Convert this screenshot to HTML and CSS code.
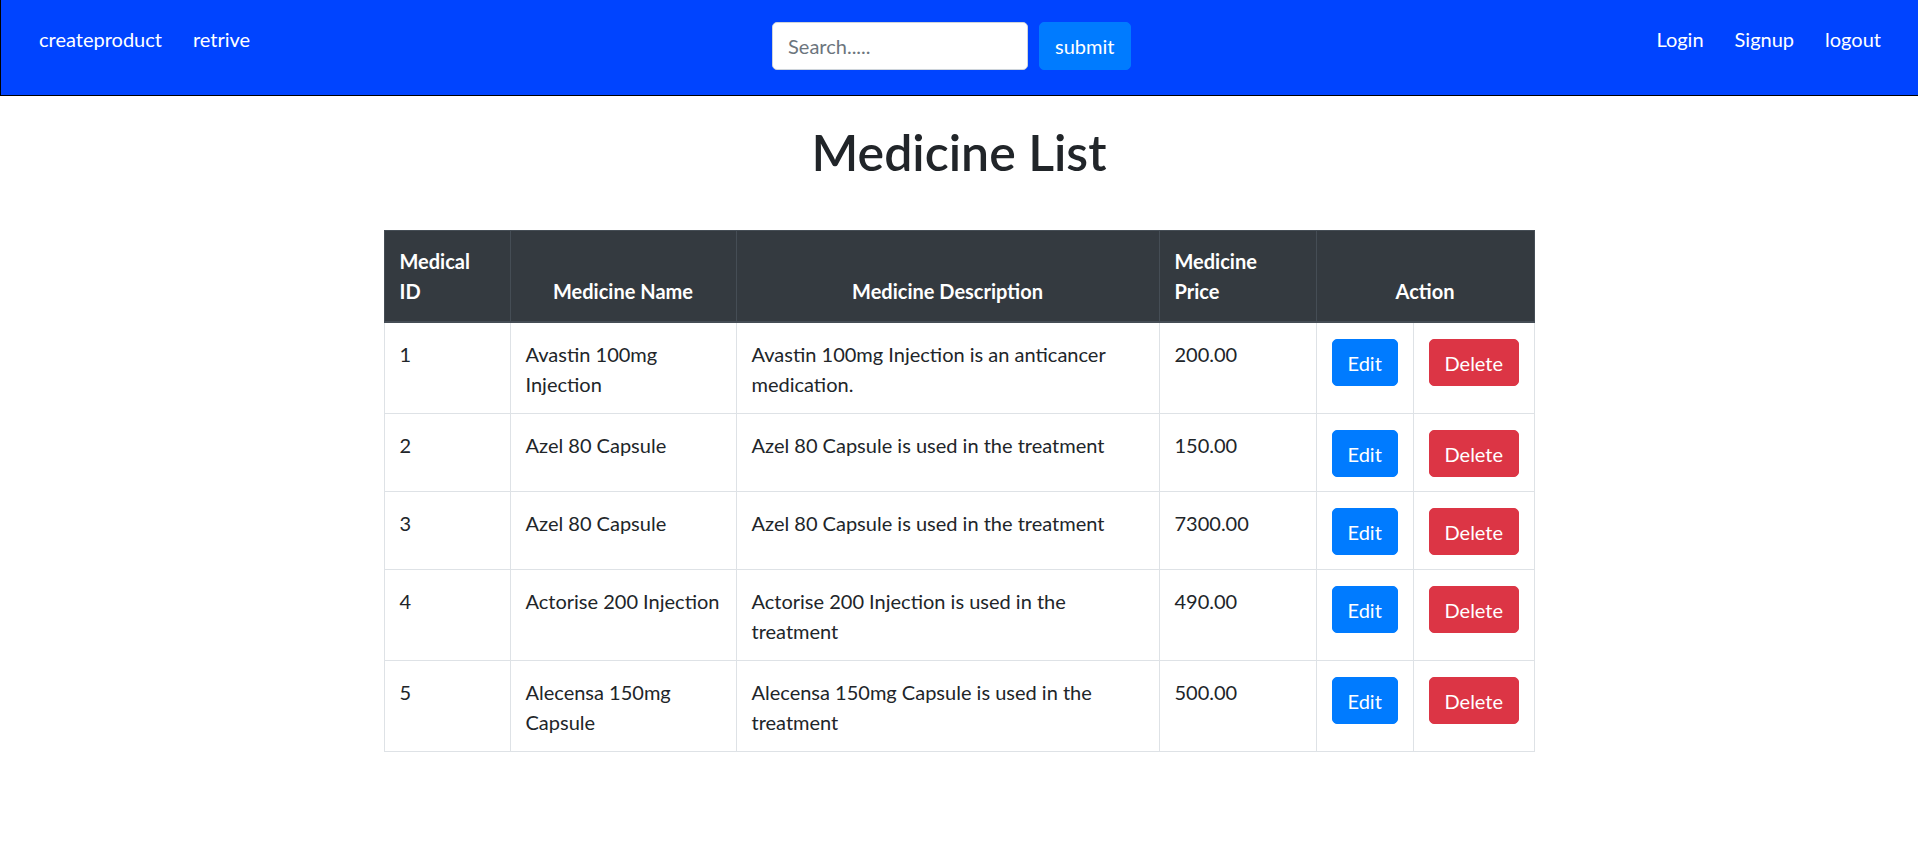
FILE: index.html
```html
<!DOCTYPE html>
<html lang="en">
<head>
<meta charset="utf-8">
<title>Medicine List</title>
<link rel="stylesheet" href="styles.css">
</head>
<body>
<nav class="navbar">
  <ul class="nav-links">
    <li><a href="#" class="nav-link">createproduct</a></li>
    <li><a href="#" class="nav-link">retrive</a></li>
  </ul>
  <form class="search">
    <input type="text" class="search-input" placeholder="Search.....">
    <button type="button" class="btn btn-primary search-btn">submit</button>
  </form>
  <ul class="nav-links">
    <li><a href="#" class="nav-link">Login</a></li>
    <li><a href="#" class="nav-link">Signup</a></li>
    <li><a href="#" class="nav-link">logout</a></li>
  </ul>
</nav>

<main class="content">
  <h1 class="title">Medicine List</h1>
  <table class="med-table">
    <colgroup>
      <col class="c-id">
      <col class="c-name">
      <col class="c-desc">
      <col class="c-price">
      <col class="c-edit">
      <col class="c-del">
    </colgroup>
    <thead>
      <tr>
        <th>Medical ID</th>
        <th class="center">Medicine Name</th>
        <th class="center">Medicine Description</th>
        <th>Medicine Price</th>
        <th class="center" colspan="2">Action</th>
      </tr>
    </thead>
    <tbody>
      <tr>
        <td>1</td>
        <td>Avastin 100mg Injection</td>
        <td>Avastin 100mg Injection is an anticancer medication.</td>
        <td>200.00</td>
        <td><button type="button" class="btn btn-primary">Edit</button></td>
        <td><button type="button" class="btn btn-danger">Delete</button></td>
      </tr>
      <tr>
        <td>2</td>
        <td>Azel 80 Capsule</td>
        <td>Azel 80 Capsule is used in the treatment</td>
        <td>150.00</td>
        <td><button type="button" class="btn btn-primary">Edit</button></td>
        <td><button type="button" class="btn btn-danger">Delete</button></td>
      </tr>
      <tr>
        <td>3</td>
        <td>Azel 80 Capsule</td>
        <td>Azel 80 Capsule is used in the treatment</td>
        <td>7300.00</td>
        <td><button type="button" class="btn btn-primary">Edit</button></td>
        <td><button type="button" class="btn btn-danger">Delete</button></td>
      </tr>
      <tr>
        <td>4</td>
        <td>Actorise 200 Injection</td>
        <td>Actorise 200 Injection is used in the treatment</td>
        <td>490.00</td>
        <td><button type="button" class="btn btn-primary">Edit</button></td>
        <td><button type="button" class="btn btn-danger">Delete</button></td>
      </tr>
      <tr>
        <td>5</td>
        <td>Alecensa 150mg Capsule</td>
        <td>Alecensa 150mg Capsule is used in the treatment</td>
        <td>500.00</td>
        <td><button type="button" class="btn btn-primary">Edit</button></td>
        <td><button type="button" class="btn btn-danger">Delete</button></td>
      </tr>
    </tbody>
  </table>
</main>
</body>
</html>
```
FILE: styles.css
```css
* {
  box-sizing: border-box;
}

body {
  margin: 0;
  font-family: "Lato", "Liberation Sans", sans-serif;
  font-size: 20px;
  line-height: 1.5;
  color: #212529;
  background: #fff;
}

/* Navbar */
.navbar {
  display: flex;
  justify-content: space-between;
  align-items: flex-start;
  height: 96px;
  padding: 22px 37px 0 38px;
  background: #0044ff;
  border-left: 1px solid #000;
  border-bottom: 1px solid #000;
}

.nav-links {
  display: flex;
  gap: 31px;
  margin: 0;
  padding: 2px 0 0;
  list-style: none;
}

.nav-link {
  color: #fff;
  text-decoration: none;
  font-size: 20px;
  line-height: 30px;
}

.search {
  display: flex;
  align-items: flex-start;
  margin: 0 4px 0 0;
}

.search-input {
  width: 256px;
  height: 48px;
  padding: 7px 15px;
  font-family: inherit;
  font-size: 20px;
  line-height: 1.5;
  color: #495057;
  background: #fff;
  border: 1px solid #ced4da;
  border-radius: 5px;
  outline: none;
}

.search-input::placeholder {
  color: #6c757d;
}

.search-btn {
  margin-left: 11px;
  height: 48px;
}

/* Buttons */
.btn {
  display: inline-block;
  vertical-align: top;
  padding: 7.5px 15px;
  font-family: inherit;
  font-size: 20px;
  line-height: 30px;
  color: #fff;
  border: 1px solid transparent;
  border-radius: 5px;
  cursor: pointer;
}

.btn-primary {
  background: #007bff;
  border-color: #007bff;
}

.btn-danger {
  background: #dc3545;
  border-color: #dc3545;
}

/* Content */
.content {
  padding-bottom: 40px;
}

.title {
  margin: 26px 0 48px;
  text-align: center;
  font-size: 50px;
  font-weight: 600;
  line-height: 1.2;
  color: #212529;
}

.med-table {
  width: 1150px;
  margin: 0 auto;
  table-layout: fixed;
  border-collapse: collapse;
  color: #212529;
}

.c-id { width: 126px; }
.c-name { width: 226px; }
.c-desc { width: 423px; }
.c-price { width: 157px; }
.c-edit { width: 97px; }
.c-del { width: 121px; }

.med-table th,
.med-table td {
  padding: 15px;
  text-align: left;
}

.med-table th {
  vertical-align: bottom;
  font-weight: 700;
  color: #fff;
  background: #343a40;
  border: 1px solid #454d55;
  border-bottom-width: 2px;
}

.med-table th.center {
  text-align: center;
}

.med-table td {
  padding: 16px 15px 14px;
  vertical-align: top;
  border: 1px solid #dee2e6;
}
```
